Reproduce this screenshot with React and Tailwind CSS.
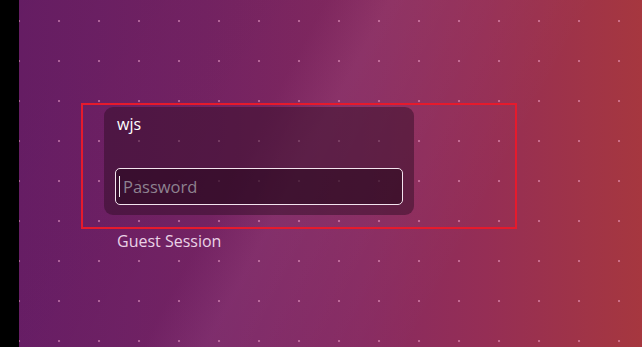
export default function App() {
  return (
    <div className="flex w-[642px] h-[347px] overflow-hidden bg-black font-['Open_Sans','Noto_Sans',sans-serif]">
      <div className="w-[19px] shrink-0 bg-black" />
      <div className="flex-1 bg-[linear-gradient(to_right,#6c1f6a_0%,#782466_30%,#872a61_55%,#952e55_75%,#a6373f_100%)]">
        <div className="h-full bg-[linear-gradient(118deg,rgba(0,0,0,0.07)_0%,rgba(0,0,0,0.04)_38%,rgba(255,255,255,0.045)_46%,rgba(255,255,255,0)_72%)]">
          <div className="h-full flex flex-col bg-[radial-gradient(circle_at_1px_1px,rgba(255,180,220,0.45)_1px,transparent_1.6px)] bg-[length:40px_40px] bg-[position:-1px_20px] pt-[103px]">
            <div className="ml-[62px] w-[436px] h-[126px] border-2 border-[#e61a2c] pl-[21px] pt-[2px]">
              <div className="w-[310px] h-[108px] rounded-[9px] bg-[rgba(45,12,35,0.48)] px-[11px] pt-[7px] flex flex-col">
                <div className="pl-[2px] text-[16px] leading-[20px] text-white">wjs</div>
                <div className="mt-[34px] h-[37px] rounded-[5px] border border-[#f3e3ee] bg-[rgba(30,5,22,0.45)] flex items-center pl-[3px]">
                  <span className="w-px h-[21px] bg-[#f0f0f0]" />
                  <span className="ml-[3px] text-[16.5px] leading-[20px] text-[#8e8290]">Password</span>
                </div>
              </div>
            </div>
            <div className="ml-[98px] mt-[2px] text-[16px] leading-[20px] text-[#ead2e6]">Guest Session</div>
          </div>
        </div>
      </div>
    </div>
  );
}
